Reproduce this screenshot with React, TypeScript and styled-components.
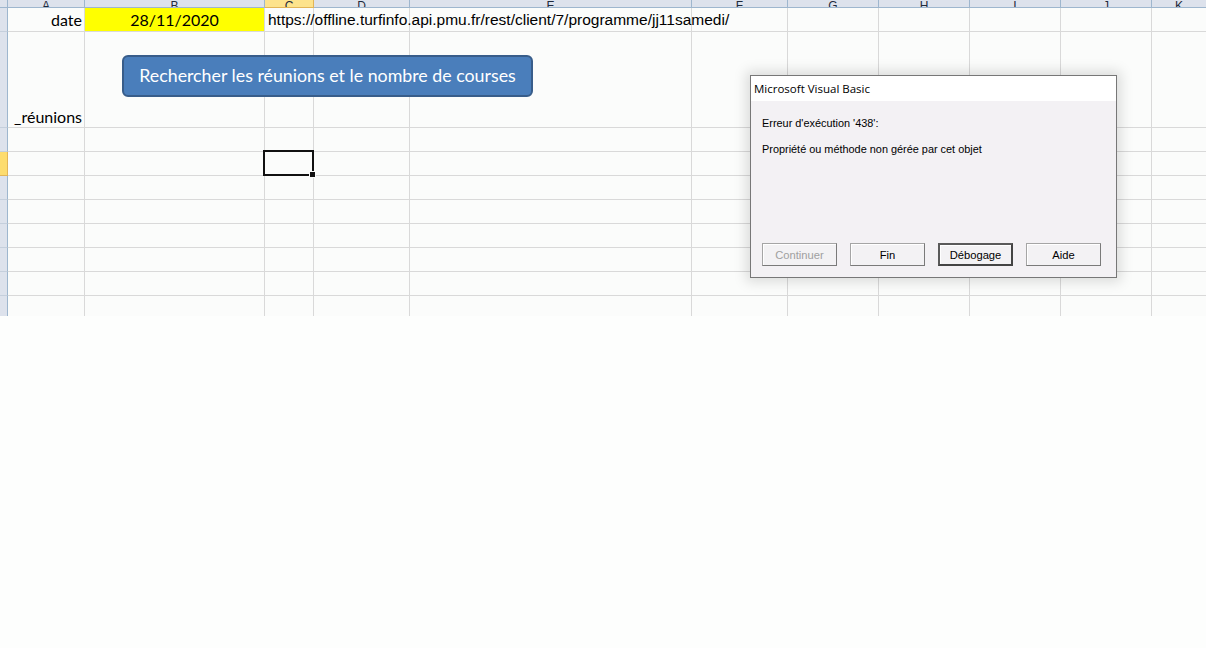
import { ReactNode } from "react"
import styled, { createGlobalStyle } from "styled-components"

const Global = createGlobalStyle`
  html, body {
    margin     : 0 ;
    padding    : 0 ;
    background : #fdfefd ;
  }
  body {
    width    : 1206px ;
    height   : 648px ;
    overflow : hidden ;
    position : relative ;
  }
`

const colWidths = [8, 77, 180, 49, 96, 282, 96, 91, 91, 91, 91, 55]
const letters = ["", "A", "B", "C", "D", "E", "F", "G", "H", "I", "J", "K"]
const rowHeights = [8, 24, 96, 24, 24, 24, 24, 24, 24, 24, 24]

const Sheet = styled.div`
  display               : grid ;
  grid-template-columns : ${colWidths.map(w => w + "px").join(" ")} ;
  grid-template-rows    : ${rowHeights.map(h => h + "px").join(" ")} ;
  height                : 316px ;
  overflow              : hidden ;
  background            : #fbfcfb ;
`

const ColHead = styled.div<{ $active?: boolean }>`
  background      : ${p => (p.$active ? "#fde38c" : "#dde2ec")} ;
  border-right    : 1px solid ${p => (p.$active ? "#e2b557" : "#9eb6ce")} ;
  border-bottom   : 1px solid ${p => (p.$active ? "#e2b557" : "#9eb6ce")} ;
  display         : flex ;
  justify-content : center ;
  align-items     : flex-end ;
  overflow        : hidden ;
  font-family     : "Liberation Sans", Arial, sans-serif ;
  font-size       : 12px ;
  line-height     : 12px ;
  color           : #1f2a3d ;

  span {
    margin-bottom : -5px ;
  }
`

const RowHead = styled.div<{ $active?: boolean }>`
  background    : ${p => (p.$active ? "#fddc6e" : "#dde2ec")} ;
  border-right  : 1px solid ${p => (p.$active ? "#e2b557" : "#9eb6ce")} ;
  border-bottom : 1px solid ${p => (p.$active ? "#e2b557" : "#c5cfdc")} ;
`

const Cell = styled.div<{ $fill?: string; $align?: string; $valign?: string }>`
  position        : relative ;
  background      : ${p => p.$fill || "#fbfcfb"} ;
  border-right    : 1px solid #d9d9d9 ;
  border-bottom   : 1px solid #d9d9d9 ;
  display         : flex ;
  justify-content : ${p => p.$align || "flex-start"} ;
  align-items     : ${p => p.$valign || "center"} ;
  white-space     : nowrap ;
  font-family     : "Lato", "Open Sans", sans-serif ;
  font-size       : 16px ;
  color           : #000 ;
  padding         : 0 2px ;
  box-sizing      : border-box ;
`

const UrlText = styled.span`
  font-family : "Liberation Sans", Arial, sans-serif ;
  font-size   : 15.5px ;
  position    : relative ;
  left        : 1px ;
  z-index     : 1 ;
`

const BottomText = styled.span`
  padding-bottom : 1px ;
`

const Selection = styled.div`
  position : absolute ;
  left     : -2px ;
  top      : -2px ;
  right    : -1px ;
  bottom   : -1px ;
  border   : 2px solid #111 ;
  z-index  : 2 ;

  &::after {
    content    : "" ;
    position   : absolute ;
    right      : -4px ;
    bottom     : -4px ;
    width      : 5px ;
    height     : 5px ;
    background : #111 ;
    border     : 1px solid #fbfcfb ;
  }
`

const MacroButton = styled.div`
  position        : absolute ;
  left            : 122px ;
  top             : 55px ;
  width           : 411px ;
  height          : 42px ;
  box-sizing      : border-box ;
  background      : #4a7ebb ;
  border          : 2px solid #385d8a ;
  border-radius   : 6px ;
  display         : flex ;
  align-items     : center ;
  justify-content : center ;
  padding-bottom  : 2px ;
  font-family     : "Lato", "Open Sans", sans-serif ;
  font-size       : 17.8px ;
  color           : #fff ;
  z-index         : 3 ;
`

const Dialog = styled.div`
  position       : absolute ;
  left           : 750px ;
  top            : 75px ;
  width          : 367px ;
  height         : 203px ;
  box-sizing     : border-box ;
  border         : 1px solid #777 ;
  background     : #f3f1f4 ;
  box-shadow     : 0 0 12px 4px rgba(0, 0, 0, 0.13) ;
  display        : flex ;
  flex-direction : column ;
  z-index        : 5 ;
`

const TitleBar = styled.div`
  height      : 25px ;
  background  : #ffffff ;
  display     : flex ;
  align-items : center ;
  padding     : 0 3px ;
  font-family : "Open Sans", "Noto Sans", sans-serif ;
  font-size   : 11.5px ;
  color       : #000 ;
`

const Body = styled.div`
  flex           : 1 ;
  display        : flex ;
  flex-direction : column ;
  padding        : 15px 11px 10px 11px ;
  font-family    : "Liberation Sans", Arial, sans-serif ;
  font-size      : 10.9px ;
  color          : #000 ;
`

const Message = styled.div`
  height      : 26px ;
  line-height : 14px ;
`

const ButtonRow = styled.div`
  margin-top : auto ;
  display    : flex ;
  gap        : 13px ;
  position   : relative ;
  top        : -1px ;
`

const DlgButton = styled.div<{ $disabled?: boolean; $focus?: boolean }>`
  width           : 75px ;
  height          : 23px ;
  box-sizing      : border-box ;
  display         : flex ;
  align-items     : center ;
  justify-content : center ;
  background      : #f3f2f4 ;
  color           : ${p => (p.$disabled ? "#a0a0a0" : "#000")} ;
  border          : ${p => (p.$focus ? "2px solid #5a5a5a" : "1px solid #a5a5a5")} ;
  border-right-color  : ${p => (p.$focus ? "#444" : "#7a7a7a")} ;
  border-bottom-color : ${p => (p.$focus ? "#444" : "#7a7a7a")} ;
  box-shadow      : inset 1px 1px 0 #ffffff ;
  font-size       : 11.2px ;
`

function Row(props: { children?: ReactNode; active?: boolean }) {
  return (
    <>
      <RowHead $active={props.active} />
      {props.children}
    </>
  )
}

function Empty(props: { from: number; to: number }) {
  const out = []
  for (let i = props.from; i <= props.to; i++) out.push(<Cell key={i} />)
  return <>{out}</>
}

export default function App() {
  return (
    <>
      <Global />
      <Sheet>
        {letters.map((l, i) => (
          <ColHead key={i} $active={l === "C"}>
            <span>{l}</span>
          </ColHead>
        ))}

        <Row>
          <Cell $align="flex-end">date</Cell>
          <Cell $fill="#ffff00" $align="center">28/11/2020</Cell>
          <Cell style={{ overflow: "visible" }}>
            <UrlText>https://offline.turfinfo.api.pmu.fr/rest/client/7/programme/jj11samedi/</UrlText>
          </Cell>
          <Cell />
          <Cell />
          <Empty from={6} to={11} />
        </Row>

        <Row>
          <Cell $align="flex-end" $valign="flex-end">
            <BottomText>_réunions</BottomText>
          </Cell>
          <Empty from={2} to={11} />
        </Row>

        <Row>
          <Empty from={1} to={11} />
        </Row>

        <Row active>
          <Cell />
          <Cell />
          <Cell>
            <Selection />
          </Cell>
          <Empty from={4} to={11} />
        </Row>

        {[5, 6, 7, 8, 9, 10].map(r => (
          <Row key={r}>
            <Empty from={1} to={11} />
          </Row>
        ))}
      </Sheet>

      <MacroButton>Rechercher les réunions et le nombre de courses</MacroButton>

      <Dialog>
        <TitleBar>Microsoft Visual Basic</TitleBar>
        <Body>
          <Message>Erreur d'exécution '438':</Message>
          <Message>Propriété ou méthode non gérée par cet objet</Message>
          <ButtonRow>
            <DlgButton $disabled>Continuer</DlgButton>
            <DlgButton>Fin</DlgButton>
            <DlgButton $focus>Débogage</DlgButton>
            <DlgButton>Aide</DlgButton>
          </ButtonRow>
        </Body>
      </Dialog>
    </>
  )
}
